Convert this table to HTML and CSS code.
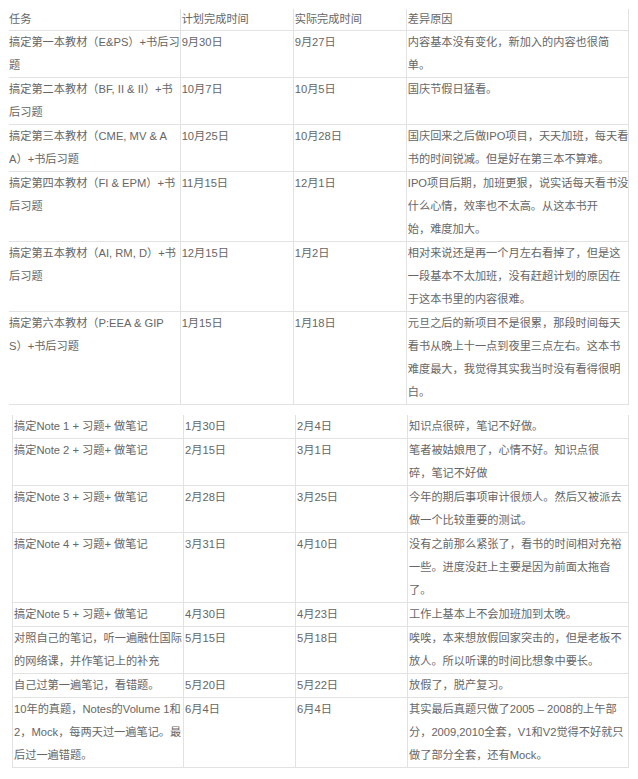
FILE: index.html
```html
<!DOCTYPE html>
<html lang="zh-CN">
<head>
<meta charset="utf-8">
<title>CFA 复习计划</title>
<link rel="stylesheet" href="styles.css">
</head>
<body>
<div class="page">
  <table class="plan plan-a">
    <colgroup><col class="ca1"><col class="ca2"><col class="ca3"><col class="ca4"></colgroup>
    <tr class="head"><td>任务</td><td>计划完成时间</td><td>实际完成时间</td><td>差异原因</td></tr>
    <tr><td>搞定第一本教材（E&amp;PS）+书后习<br>题</td><td>9月30日</td><td>9月27日</td><td>内容基本没有变化，新加入的内容也很简<br>单。</td></tr>
    <tr><td>搞定第二本教材（BF, II &amp; II）+书<br>后习题</td><td>10月7日</td><td>10月5日</td><td>国庆节假日猛看。</td></tr>
    <tr><td>搞定第三本教材（CME, MV &amp; A<br>A）+书后习题</td><td>10月25日</td><td>10月28日</td><td>国庆回来之后做IPO项目，天天加班，每天看<br>书的时间锐减。但是好在第三本不算难。</td></tr>
    <tr><td>搞定第四本教材（FI &amp; EPM）+书<br>后习题</td><td>11月15日</td><td>12月1日</td><td>IPO项目后期，加班更狠，说实话每天看书没<br>什么心情，效率也不太高。从这本书开<br>始，难度加大。</td></tr>
    <tr><td>搞定第五本教材（AI, RM, D）+书<br>后习题</td><td>12月15日</td><td>1月2日</td><td>相对来说还是再一个月左右看掉了，但是这<br>一段基本不太加班，没有赶超计划的原因在<br>于这本书里的内容很难。</td></tr>
    <tr><td>搞定第六本教材（P:EEA &amp; GIP<br>S）+书后习题</td><td>1月15日</td><td>1月18日</td><td>元旦之后的新项目不是很累，那段时间每天<br>看书从晚上十一点到夜里三点左右。这本书<br>难度最大，我觉得其实我当时没有看得很明<br>白。</td></tr>
  </table>

  <table class="plan plan-b">
    <colgroup><col class="cb1"><col class="cb2"><col class="cb3"><col class="cb4"></colgroup>
    <tr><td>搞定Note 1 + 习题+ 做笔记</td><td>1月30日</td><td>2月4日</td><td>知识点很碎，笔记不好做。</td></tr>
    <tr><td>搞定Note 2 + 习题+ 做笔记</td><td>2月15日</td><td>3月1日</td><td>笔者被姑娘甩了，心情不好。知识点很<br>碎，笔记不好做</td></tr>
    <tr><td>搞定Note 3 + 习题+ 做笔记</td><td>2月28日</td><td>3月25日</td><td>今年的期后事项审计很烦人。然后又被派去<br>做一个比较重要的测试。</td></tr>
    <tr><td>搞定Note 4 + 习题+ 做笔记</td><td>3月31日</td><td>4月10日</td><td>没有之前那么紧张了，看书的时间相对充裕<br>一些。进度没赶上主要是因为前面太拖沓<br>了。</td></tr>
    <tr><td>搞定Note 5 + 习题+ 做笔记</td><td>4月30日</td><td>4月23日</td><td>工作上基本上不会加班加到太晚。</td></tr>
    <tr><td>对照自己的笔记，听一遍融仕国际<br>的网络课，并作笔记上的补充</td><td>5月15日</td><td>5月18日</td><td>唉唉，本来想放假回家突击的，但是老板不<br>放人。所以听课的时间比想象中要长。</td></tr>
    <tr><td>自己过第一遍笔记，看错题。</td><td>5月20日</td><td>5月22日</td><td>放假了，脱产复习。</td></tr>
    <tr><td>10年的真题，Notes的Volume 1和<br>2，Mock，每两天过一遍笔记。最<br>后过一遍错题。</td><td>6月4日</td><td>6月4日</td><td>其实最后真题只做了2005 – 2008的上午部<br>分，2009,2010全套，V1和V2觉得不好就只<br>做了部分全套，还有Mock。</td></tr>
  </table>
</div>
</body>
</html>
```

FILE: styles.css
```css
html, body {
  margin: 0;
  padding: 0;
  background: #ffffff;
}

body {
  font-family: "Liberation Sans", "Noto Sans CJK SC", sans-serif;
  font-size: 11.2px;
  color: #666666;
}

.page {
  padding: 9px 10px 0 9px;
}

.plan {
  border-collapse: collapse;
  table-layout: fixed;
}

.plan td {
  padding: 0 0 0 1px;
  vertical-align: top;
  line-height: 23px;
  border: 1px solid #e2e2e2;
  white-space: nowrap;
  overflow: hidden;
}

.plan tr:first-child td {
  border-top: none;
}

/* first table: no outer left edge */
.plan-a {
  width: 620px;
}

.plan-a td:first-child {
  border-left: none;
  padding-left: 0;
}

.plan-a .head td {
  line-height: 21px;
}

.ca1 { width: 171px; }
.ca2 { width: 113px; }
.ca3 { width: 113px; }
.ca4 { width: 222px; }

/* second table: boxed on left, right and bottom */
.plan-b {
  width: 616px;
  margin: 10px 0 0 3px;
}

.cb1 { width: 171px; }
.cb2 { width: 112px; }
.cb3 { width: 112px; }
.cb4 { width: 221px; }
```
